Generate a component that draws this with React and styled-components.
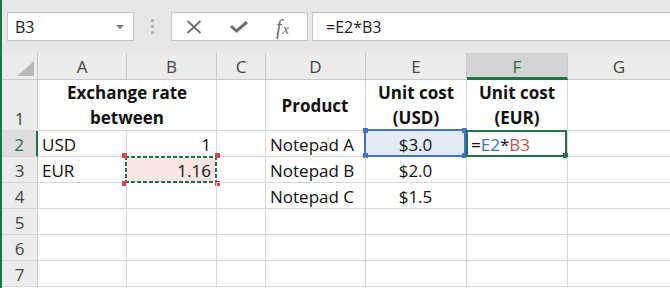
import styled, { createGlobalStyle } from "styled-components";

const GREEN = "#217346";
const GRID = "#d8d8d8";

const GlobalStyle = createGlobalStyle`
  body {
    margin: 0;
    background: #ffffff;
    font-family: "Open Sans", "Liberation Sans", sans-serif;
  }
`;

const columns = [
  { name: "A", width: 89 },
  { name: "B", width: 90 },
  { name: "C", width: 49 },
  { name: "D", width: 100 },
  { name: "E", width: 101 },
  { name: "F", width: 101, active: true },
  { name: "G", width: 103 },
];

const App = () => {
  return (
    <Window>
      <GlobalStyle />
      <FormulaBar>
        <NameBox>
          <span>B3</span>
          <DropArrow />
        </NameBox>
        <Grip>
          <i />
          <i />
          <i />
        </Grip>
        <FnButtons>
          <svg width="16" height="14" viewBox="0 0 16 14">
            <path d="M1.5 1 L14.5 13 M14.5 1 L1.5 13" stroke="#6e6e6e" strokeWidth="1.8" fill="none" />
          </svg>
          <svg width="18" height="12" viewBox="0 0 18 12">
            <path d="M1 5 L6.5 10 L17 1" stroke="#6e6e6e" strokeWidth="3" fill="none" />
          </svg>
          <Fx>
            f<small>x</small>
          </Fx>
        </FnButtons>
        <FormulaInput>=E2*B3</FormulaInput>
      </FormulaBar>

      <Sheet>
        <Corner>
          <CornerTriangle />
        </Corner>
        {columns.map((c) => (
          <ColHead key={c.name} $active={c.active}>
            {c.name}
          </ColHead>
        ))}

        <RowHead>1</RowHead>
        <Cell $span={2} $bold $center $wrap>
          Exchange rate between
        </Cell>
        <Cell />
        <Cell $bold $center $middle>
          Product
        </Cell>
        <Cell $bold $center $wrap>
          Unit cost (USD)
        </Cell>
        <Cell $bold $center $wrap>
          Unit cost (EUR)
        </Cell>
        <Cell />

        <RowHead $active>2</RowHead>
        <Cell>USD</Cell>
        <Cell $right>1</Cell>
        <Cell />
        <Cell>Notepad A</Cell>
        <Cell $center $tint="#e3ebf7">
          $3.0
          <RefBox $color="#4472c4">
            <Handle $color="#4472c4" $pos="tl" />
            <Handle $color="#4472c4" $pos="tr" />
            <Handle $color="#4472c4" $pos="bl" />
            <Handle $color="#4472c4" $pos="br" />
          </RefBox>
        </Cell>
        <Cell>
          <span>
            =<Ref $color="#4472c4">E2</Ref>*<Ref $color="#c0504d">B3</Ref>
          </span>
          <ActiveBox>
            <Handle $color={GREEN} $pos="br" />
          </ActiveBox>
        </Cell>
        <Cell />

        <RowHead>3</RowHead>
        <Cell>EUR</Cell>
        <Cell $right $tint="#fbe6e6">
          1.16
          <CopyBox>
            <Handle $color="#cf4b4b" $pos="tl" />
            <Handle $color="#cf4b4b" $pos="tr" />
            <Handle $color="#cf4b4b" $pos="bl" />
            <Handle $color="#cf4b4b" $pos="br" />
          </CopyBox>
        </Cell>
        <Cell />
        <Cell>Notepad B</Cell>
        <Cell $center>$2.0</Cell>
        <Cell />
        <Cell />

        <RowHead>4</RowHead>
        <Cell />
        <Cell />
        <Cell />
        <Cell>Notepad C</Cell>
        <Cell $center>$1.5</Cell>
        <Cell />
        <Cell />

        {[5, 6, 7].map((r) => (
          <Row key={r} n={r} />
        ))}
      </Sheet>
    </Window>
  );
};

const Row = ({ n }) => (
  <>
    <RowHead>{n}</RowHead>
    {columns.map((c) => (
      <Cell key={c.name} />
    ))}
  </>
);

const Window = styled.div`
  width: 668px;
  height: 288px;
  overflow: hidden;
  border-left: 2px solid ${GREEN};
  background: #ffffff;
`;

const FormulaBar = styled.div`
  height: 53px;
  display: flex;
  align-items: center;
  padding-left: 5px;
  background: #e7e7e7;
`;

const Box = styled.div`
  height: 29px;
  box-sizing: border-box;
  background: #ffffff;
  border: 1px solid #c6c6c6;
  display: flex;
  align-items: center;
`;

const NameBox = styled(Box)`
  width: 127px;
  justify-content: space-between;
  padding: 0 9px 0 7px;
  font-size: 16px;
  color: #222;
`;

const DropArrow = styled.span`
  width: 0;
  height: 0;
  border-left: 4px solid transparent;
  border-right: 4px solid transparent;
  border-top: 4px solid #777;
`;

const Grip = styled.div`
  width: 37px;
  display: flex;
  flex-direction: column;
  align-items: center;
  gap: 3px;

  i {
    width: 3px;
    height: 3px;
    background: #b4b4b4;
  }
`;

const FnButtons = styled(Box)`
  width: 137px;
  gap: 28px;
  padding-left: 14px;
`;

const Fx = styled.span`
  font-family: "Liberation Serif", "DejaVu Serif", serif;
  font-style: italic;
  font-size: 20px;
  color: #6e6e6e;
  line-height: 1;

  small {
    font-size: 15px;
    margin-left: 1px;
  }
`;

const FormulaInput = styled(Box)`
  flex: 1;
  margin-left: 4px;
  padding-left: 13px;
  border-right: none;
  font-size: 16px;
  color: #222;
`;

const Sheet = styled.div`
  display: grid;
  grid-template-columns: 36px ${columns.map((c) => `${c.width}px`).join(" ")};
  grid-template-rows: 27px 51px repeat(6, 26px);
  font-size: 17px;
  color: #111;
`;

const Head = styled.div`
  box-sizing: border-box;
  background: #ececec;
  border-right: 1px solid #c9c9c9;
  border-bottom: 1px solid #c9c9c9;
  color: #444;
  display: flex;
  justify-content: center;
`;

const Corner = styled(Head)`
  align-items: flex-end;
  justify-content: flex-end;
  padding: 0 3px 3px 0;
`;

const CornerTriangle = styled.span`
  width: 0;
  height: 0;
  border-left: 17px solid transparent;
  border-bottom: 15px solid #b9b9b9;
`;

const ColHead = styled(Head)`
  align-items: center;
  background: ${(p) => (p.$active ? "#d3d3d3" : "#ececec")};
  color: ${(p) => (p.$active ? GREEN : "#444")};
  border-bottom: ${(p) => (p.$active ? `3px solid ${GREEN}` : "1px solid #c9c9c9")};
  padding-top: ${(p) => (p.$active ? "2px" : "0")};
`;

const RowHead = styled(Head)`
  align-items: flex-end;
  line-height: 23px;
  border-bottom-color: #d6d6d6;
  background: ${(p) => (p.$active ? "#dedede" : "#ececec")};
  color: ${(p) => (p.$active ? GREEN : "#444")};
  border-right: ${(p) => (p.$active ? `2px solid ${GREEN}` : "1px solid #c9c9c9")};
`;

const Cell = styled.div`
  position: relative;
  box-sizing: border-box;
  grid-column: span ${(p) => p.$span || 1};
  border-right: 1px solid ${GRID};
  border-bottom: 1px solid ${GRID};
  background: ${(p) => p.$tint || "transparent"};
  display: flex;
  align-items: ${(p) => (p.$middle ? "center" : "flex-end")};
  justify-content: ${(p) => (p.$center ? "center" : p.$right ? "flex-end" : "flex-start")};
  text-align: ${(p) => (p.$center ? "center" : "left")};
  padding: 0 5px 0 4px;
  line-height: 23px;
  font-weight: ${(p) => (p.$bold ? 700 : 400)};
  white-space: nowrap;

  ${(p) =>
    p.$wrap &&
    `
    white-space: normal;
    padding: 0 2px;
    line-height: 25px;
  `}
`;

const Ref = styled.span`
  color: ${(p) => p.$color};
`;

const Overlay = styled.div`
  position: absolute;
  box-sizing: border-box;
  pointer-events: none;
`;

const RefBox = styled(Overlay)`
  inset: -2px 0 -1px -2px;
  border: 2px solid ${(p) => p.$color};
`;

const ActiveBox = styled(Overlay)`
  inset: -1px 0 -1px -1px;
  border: 2px solid ${GREEN};
`;

const dash = (dir) =>
  `repeating-linear-gradient(${dir}, ${GREEN} 0 4px, #ffffff 4px 6px)`;

const CopyBox = styled(Overlay)`
  inset: -1px -1px -1px -2px;
  background: ${dash("90deg")} top / 100% 2px no-repeat,
    ${dash("90deg")} bottom / 100% 2px no-repeat,
    ${dash("180deg")} left / 2px 100% no-repeat,
    ${dash("180deg")} right / 2px 100% no-repeat;
`;

const Handle = styled.span`
  position: absolute;
  width: 5px;
  height: 5px;
  background: ${(p) => p.$color};
  ${(p) => (p.$pos[0] === "t" ? "top: -3px;" : "bottom: -3px;")}
  ${(p) => (p.$pos[1] === "l" ? "left: -3px;" : "right: -3px;")}
`;

export default App;
